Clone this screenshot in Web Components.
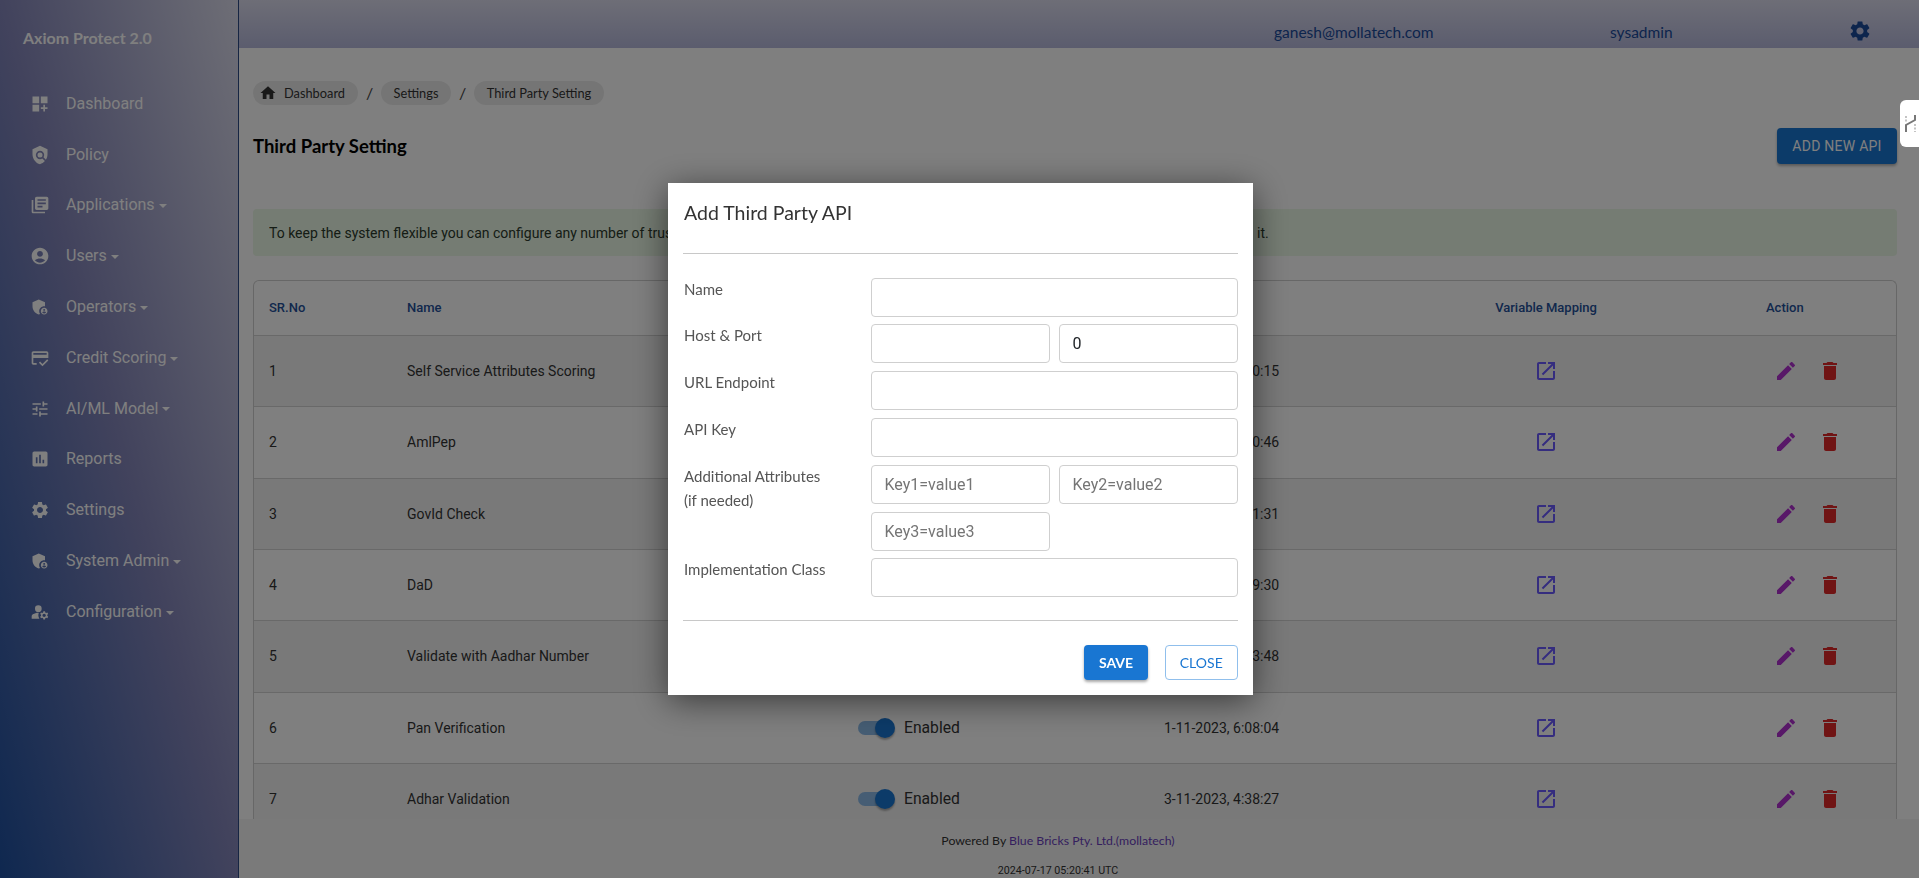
<!DOCTYPE html>
<html lang="en">
<head>
<meta charset="utf-8">
<title>Third Party Setting</title>
<style>
html,body{margin:0;padding:0;height:100%;overflow:hidden}
body{font-family:Roboto,sans-serif;background:#fff}
</style>
</head>
<body>
<app-shell>
  <app-sidebar slot="side">
    <nav-item icon="dashboard">Dashboard</nav-item>
    <nav-item icon="policy">Policy</nav-item>
    <nav-item icon="books" caret>Applications</nav-item>
    <nav-item icon="account" caret>Users</nav-item>
    <nav-item icon="admin" caret>Operators</nav-item>
    <nav-item icon="credit" caret>Credit Scoring</nav-item>
    <nav-item icon="tune" caret>AI/ML Model</nav-item>
    <nav-item icon="assessment">Reports</nav-item>
    <nav-item icon="settings">Settings</nav-item>
    <nav-item icon="admin" caret>System Admin</nav-item>
    <nav-item icon="manage" caret>Configuration</nav-item>
  </app-sidebar>
  <app-header slot="top"></app-header>
  <page-content slot="main">
    <bread-crumbs></bread-crumbs>
    <title-bar></title-bar>
    <info-alert>To keep the system flexible you can configure any number of trusted third party APIs, map their variables and enable or disable each one as you need</info-alert>
    <api-table>
      <api-row n="1" name="Self Service Attributes Scoring" date="1-11-2023, 6:10:15"></api-row>
      <api-row n="2" name="AmlPep" date="1-11-2023, 6:10:46"></api-row>
      <api-row n="3" name="GovId Check" date="1-11-2023, 6:11:31"></api-row>
      <api-row n="4" name="DaD" date="1-11-2023, 6:09:30"></api-row>
      <api-row n="5" name="Validate with Aadhar Number" date="1-11-2023, 6:13:48"></api-row>
      <api-row n="6" name="Pan Verification" date="1-11-2023, 6:08:04"></api-row>
      <api-row n="7" name="Adhar Validation" date="3-11-2023, 4:38:27"></api-row>
    </api-table>
  </page-content>
  <page-footer slot="foot"></page-footer>
</app-shell>
<api-modal></api-modal>
<side-tab></side-tab>

<script>
const P={
dashboard:'<path d="M3 3h8v8H3zm10 0h8v8h-8zM3 13h8v8H3zm15 0h-2v3h-3v2h3v3h2v-3h3v-2h-3z"/>',
policy:'<path d="M21 5l-9-4-9 4v6c0 5.55 3.84 10.74 9 12 2.3-.56 4.33-1.9 5.88-3.71l-3.12-3.12c-1.94 1.29-4.58 1.07-6.29-.64-1.95-1.95-1.95-5.12 0-7.07 1.95-1.95 5.12-1.95 7.07 0 1.71 1.71 1.92 4.35.64 6.29l2.9 2.9C20.29 15.69 21 13.38 21 11V5z"/><circle cx="12" cy="12" r="3"/>',
books:'<path d="M4 6H2v14c0 1.1.9 2 2 2h14v-2H4V6zm16-4H8c-1.1 0-2 .9-2 2v12c0 1.1.9 2 2 2h12c1.1 0 2-.9 2-2V4c0-1.1-.9-2-2-2zm-1 9H9V9h10v2zm-4 4H9v-2h6v2zm4-8H9V5h10v2z"/>',
account:'<path d="M12 2C6.48 2 2 6.48 2 12s4.48 10 10 10 10-4.48 10-10S17.52 2 12 2zm0 4c1.93 0 3.5 1.57 3.5 3.5S13.93 13 12 13s-3.5-1.57-3.5-3.5S10.07 6 12 6zm0 14c-2.03 0-4.43-.82-6.14-2.88C7.55 15.8 9.68 15 12 15s4.45.8 6.14 2.12C16.43 19.18 14.03 20 12 20z"/>',
admin:'<path d="M17 11c.34 0 .67.04 1 .09V6.27L10.5 3 3 6.27v4.91c0 4.54 3.2 8.79 7.5 9.82.55-.13 1.08-.32 1.6-.55-.69-.98-1.1-2.17-1.1-3.45 0-3.31 2.69-6 6-6z"/><path d="M17 13c-2.21 0-4 1.79-4 4s1.79 4 4 4 4-1.79 4-4-1.79-4-4-4zm0 1.38c.62 0 1.12.51 1.12 1.12s-.51 1.12-1.12 1.12-1.12-.51-1.12-1.12.5-1.12 1.12-1.12zm0 5.37c-.93 0-1.74-.46-2.24-1.17.05-.72 1.51-1.08 2.24-1.08s2.19.36 2.24 1.08c-.5.71-1.31 1.17-2.24 1.17z"/>',
credit:'<path d="M20 4H4c-1.11 0-2 .89-2 2v12c0 1.11.89 2 2 2h4v-2H4v-6h18V6c0-1.11-.89-2-2-2zm0 4H4V6h16v2zm-5.07 11.17l-2.83-2.83-1.41 1.41L14.93 22 22 14.93l-1.41-1.41-5.66 5.65z"/>',
tune:'<path d="M3 17v2h6v-2H3zM3 5v2h10V5H3zm10 16v-2h8v-2h-8v-2h-2v6h2zM7 9v2H3v2h4v2h2V9H7zm14 4v-2H11v2h10zm-6-4h2V7h4V5h-4V3h-2v6z"/>',
assessment:'<path d="M19 3H5c-1.1 0-2 .9-2 2v14c0 1.1.9 2 2 2h14c1.1 0 2-.9 2-2V5c0-1.1-.9-2-2-2zM9 17H7v-7h2v7zm4 0h-2V7h2v10zm4 0h-2v-4h2v4z"/>',
settings:'<path d="M19.14 12.94c.04-.3.06-.61.06-.94 0-.32-.02-.64-.07-.94l2.03-1.58c.18-.14.23-.41.12-.61l-1.92-3.32c-.12-.22-.37-.29-.59-.22l-2.39.96c-.5-.38-1.03-.7-1.62-.94l-.36-2.54c-.04-.24-.24-.41-.48-.41h-3.84c-.24 0-.43.17-.47.41l-.36 2.54c-.59.24-1.13.57-1.62.94l-2.39-.96c-.22-.08-.47 0-.59.22L2.74 8.87c-.12.21-.08.47.12.61l2.03 1.58c-.05.3-.09.63-.09.94s.02.64.07.94l-2.03 1.58c-.18.14-.23.41-.12.61l1.92 3.32c.12.22.37.29.59.22l2.39-.96c.5.38 1.03.7 1.62.94l.36 2.54c.05.24.24.41.48.41h3.84c.24 0 .44-.17.47-.41l.36-2.54c.59-.24 1.13-.56 1.62-.94l2.39.96c.22.08.47 0 .59-.22l1.92-3.32c.12-.22.07-.47-.12-.61l-2.01-1.58zM12 15.6c-1.98 0-3.6-1.62-3.6-3.6s1.62-3.6 3.6-3.6 3.6 1.62 3.6 3.6-1.62 3.6-3.6 3.6z"/>',
manage:'<path d="M10.67 13.02c-.22-.01-.44-.02-.67-.02-2.42 0-4.68.67-6.61 1.82-.88.52-1.39 1.5-1.39 2.53V20h9.26c-.79-1.13-1.26-2.51-1.26-4 0-1.07.25-2.07.67-2.98z"/><circle cx="10" cy="8" r="4"/><path d="M20.75 16c0-.22-.03-.42-.06-.63l1.14-1.01-1-1.73-1.45.49c-.32-.27-.68-.48-1.08-.63L18 11h-2l-.3 1.49c-.4.15-.76.36-1.08.63l-1.45-.49-1 1.73 1.14 1.01c-.03.21-.06.41-.06.63s.03.42.06.63l-1.14 1.01 1 1.73 1.45-.49c.32.27.68.48 1.08.63L16 21h2l.3-1.49c.4-.15.76-.36 1.08-.63l1.45.49 1-1.73-1.14-1.01c.03-.21.06-.41.06-.63zM17 18c-1.1 0-2-.9-2-2s.9-2 2-2 2 .9 2 2-.9 2-2 2z"/>',
home:'<path d="M10 20v-6h4v6h5v-8h3L12 3 2 12h3v8z"/>',
open:'<path d="M19 19H5V5h7V3H5c-1.11 0-2 .9-2 2v14c0 1.1.89 2 2 2h14c1.1 0 2-.9 2-2v-7h-2v7zM14 3v2h3.59l-9.83 9.83 1.41 1.41L19 6.41V10h2V3h-7z"/>',
edit:'<path d="M3 17.25V21h3.75L17.81 9.94l-3.75-3.75L3 17.25zM20.71 7.04c.39-.39.39-1.02 0-1.41l-2.34-2.34c-.39-.39-1.02-.39-1.41 0l-1.83 1.83 3.75 3.75 1.83-1.83z"/>',
del:'<path d="M6 19c0 1.1.9 2 2 2h8c1.1 0 2-.9 2-2V7H6v12zM19 4h-3.5l-1-1h-5l-1 1H5v2h14V4z"/>'
};
const HEAD='Lato,"Open Sans",sans-serif';
function def(name,html,extra){
  customElements.define(name,class extends HTMLElement{
    constructor(){super();this.attachShadow({mode:'open'});}
    connectedCallback(){
      const attrs={};for(const a of this.attributes)attrs[a.name]=a.value;
      this.shadowRoot.innerHTML=typeof html==='function'?html(attrs):html;
      if(extra)extra(this);
    }
  });
}
def('x-icon',a=>`<style>:host{display:inline-flex;width:${a.size||24}px;height:${a.size||24}px;flex:none;color:${a.color||'inherit'}}svg{width:100%;height:100%;fill:currentColor;display:block}</style><svg viewBox="0 0 24 24" aria-hidden="true">${P[a.name]||''}</svg>`);

def('app-shell',`<style>
:host{display:grid;grid-template-columns:239px 1fr;grid-template-rows:48px 1fr 59px;height:878px;overflow:hidden}
::slotted([slot=side]){grid-row:1/4}
</style><slot name="side"></slot><slot name="top"></slot><slot name="main"></slot><slot name="foot"></slot>`);

def('app-sidebar',`<style>
:host{display:flex;flex-direction:column;box-sizing:border-box;border-right:1px solid #2c4a86;background:linear-gradient(to top right,#1e50a0 0%,#8486ba 50%,#dcdcec 100%);color:#fff}
.brand{height:78.5px;box-sizing:border-box;padding:25px 0 0 23px;font:700 16px/26px ${HEAD};color:#fff}
</style><div class="brand">Axiom Protect 2.0</div><slot></slot>`);

def('nav-item',a=>`<style>
:host{display:flex;align-items:center;height:50.8px;padding-left:30px;gap:16px;font:400 16px/24px Roboto,sans-serif;color:#fff}
.c{display:inline-block;border-top:4px solid currentColor;border-left:4px solid transparent;border-right:4px solid transparent;margin-left:4px;vertical-align:middle}
</style><x-icon name="${a.icon}" size="20"></x-icon><span><slot></slot>${'caret' in a?'<i class="c"></i>':''}</span>`);

def('app-header',`<style>
:host{display:flex;background:linear-gradient(180deg,#dcdcee,#b6b9dc);color:#1a4a9a;font:400 15.5px/24px ${HEAD};position:relative}
.m{position:absolute;top:20px}
</style><span class="m" style="left:1035px">ganesh@mollatech.com</span><span class="m" style="left:1371px">sysadmin</span><x-icon class="m" style="left:1609px;top:19px" name="settings" size="24"></x-icon>`);

def('page-content',`<style>
:host{display:block;overflow:hidden;padding:33px 22px 0 14px;background:#fff;min-height:0}
</style><slot></slot>`);

def('bread-crumbs',`<style>
:host{display:flex;align-items:center;height:24px;font:400 12.8px/24px ${HEAD};color:#333;white-space:nowrap}
.chip{display:inline-flex;align-items:center;justify-content:center;height:24px;background:#ebebeb;border-radius:12px;box-sizing:border-box}
.s{width:23px;text-align:center;font-size:16px;color:#444}
.h{justify-content:flex-start;padding-left:6px;gap:7px;width:105px}
</style><span class="chip h"><x-icon name="home" size="18"></x-icon>Dashboard</span><span class="s">/</span><span class="chip" style="width:70px">Settings</span><span class="s">/</span><span class="chip" style="width:130px">Third Party Setting</span>`);

def('title-bar',`<style>
:host{display:flex;align-items:center;justify-content:space-between;height:36px;margin-top:23px}
h1{margin:0;font:700 18.5px/28px ${HEAD};color:#000}
button{width:120px;height:36px;border:0;border-radius:4px;background:#1976d2;color:#fff;font:400 14px/36px Roboto,sans-serif;letter-spacing:.25px;padding:0;box-shadow:0 2px 3px rgba(0,0,0,.3)}
</style><h1>Third Party Setting</h1><button>ADD NEW API</button>`);

def('info-alert',`<style>
:host{display:flex;align-items:center;box-sizing:border-box;height:47px;margin-top:45px;padding:0 16px;background:#eaf8e6;border-radius:4px;color:#2c3a2c;font:400 14px/20px Roboto,sans-serif;white-space:nowrap}
.m{display:block;width:988px;overflow:hidden;flex:none}
</style><span class="m"><slot></slot></span><span>it.</span>`);

const COLS='137px 451px 306px 194px 408px 1fr';
def('api-table',`<style>
:host{display:block;box-sizing:border-box;margin-top:24px;border:1px solid #cfcfcf;border-bottom:0;border-radius:6px 6px 0 0}
.h{display:grid;grid-template-columns:${COLS};height:54px;align-items:center;font:500 13px/20px Roboto,sans-serif;color:#24509a}
.h span{padding-left:16px}.h span:first-child{padding-left:15px}.h .c{padding:0;text-align:center}
</style><div class="h"><span>SR.No</span><span>Name</span><span>Status</span><span>Created On</span><span class="c">Variable Mapping</span><span>Action</span></div><slot></slot>`);

def('api-row',a=>`<style>
:host{display:grid;grid-template-columns:${COLS};height:71.33px;box-sizing:border-box;border-top:1px solid #d2d2d2;align-items:center;font:400 14px/20px Roboto,sans-serif;color:#333;background:${(+a.n)%2?'#f3f3f3':'#fff'}}
.p{padding-left:16px}.f{padding-left:15px;color:#333}
.s{display:flex;align-items:center;padding-left:16px;font-size:15.7px;gap:12px}
.v{display:flex;justify-content:center}
.a{display:flex;gap:20px;padding-left:24px}
</style><span class="f">${a.n}</span><span class="p">${a.name}</span><span class="s"><x-toggle></x-toggle>Enabled</span><span class="p">${a.date}</span><span class="v"><x-icon name="open" color="#6a5aff"></x-icon></span><span class="a"><x-icon name="edit" color="#b030d0"></x-icon><x-icon name="del" color="#e02828"></x-icon></span>`);

def('x-toggle',`<style>
:host{display:block;position:relative;width:34px;height:14px;border-radius:7px;background:#8cbbe9}
i{position:absolute;right:-3px;top:-3px;width:20px;height:20px;border-radius:50%;background:#1976d2;box-shadow:0 2px 2px rgba(0,0,0,.3)}
</style><i></i>`);

def('page-footer',`<style>
:host{display:block;background:#f5f5f5;text-align:center;padding-right:42px;font:400 12.3px/18px ${HEAD};color:#333}
.a{padding-top:13px}.b{margin-top:13px;font:400 10.7px/16px Roboto,sans-serif;color:#333}
b{font-weight:400;color:#6a3fbd}
</style><div class="a">Powered By <b>Blue Bricks Pty. Ltd.(mollatech)</b></div><div class="b">2024-07-17 05:20:41 UTC</div>`);

def('api-modal',`<style>
:host{position:fixed;inset:0;display:flex;align-items:center;justify-content:center;padding-left:2px;background:rgba(0,0,0,.5);z-index:10}
.d{width:585px;box-sizing:border-box;background:#fff;padding:15px;box-shadow:0 6px 32px rgba(0,0,0,.55)}
h2{margin:0 0 25px;padding-left:1px;font:400 19.5px/30px ${HEAD};color:#333}
hr{margin:0;border:0;border-top:1px solid #c8c8c8}
.g{display:grid;grid-template-columns:188px 1fr 1fr;column-gap:0;row-gap:7.8px;padding:24px 0 23px}
.g>label{grid-column:1;padding-left:1px;margin-top:-1px;font:400 15px/24px ${HEAD};color:#555}
.w{grid-column:2/4}
.t{display:grid;grid-template-columns:1fr 1fr;gap:7.8px 9px;grid-column:2/4}
input{display:block;width:100%;box-sizing:border-box;height:39px;border:1px solid #cfcfcf;border-radius:4px;padding:0 12.5px;font:400 16px Roboto,sans-serif;color:#212529;background:#fff;outline:0}
input::placeholder{color:#757575}
.b{display:flex;justify-content:flex-end;gap:16.5px;padding-top:24px;}
button{height:35px;border-radius:4px;font:400 14px/33px ${HEAD};padding:0;box-sizing:border-box}
.s{width:64px;background:#1976d2;color:#fff;border:0;font-weight:700;box-shadow:0 2px 3px rgba(0,0,0,.35)}
.c{width:73.5px;background:#fff;color:#1976d2;border:1px solid #90bfec}
</style><div class="d">
<h2>Add Third Party API</h2><hr>
<div class="g">
<label>Name</label><div class="w"><input></div>
<label>Host &amp; Port</label><div class="t"><input><input value="0"></div>
<label>URL Endpoint</label><div class="w"><input></div>
<label>API Key</label><div class="w"><input></div>
<label>Additional Attributes<br>(if needed)</label><div class="t"><input placeholder="Key1=value1"><input placeholder="Key2=value2"><input placeholder="Key3=value3"></div>
<label>Implementation Class</label><div class="w"><input></div>
</div><hr>
<div class="b"><button class="s">SAVE</button><button class="c">CLOSE</button></div>
</div>`);

def('side-tab',`<style>
:host{position:fixed;right:0;top:100px;width:19px;height:47px;background:#fff;border-radius:6px 0 0 6px;z-index:20;display:block;overflow:hidden}
svg{display:block;width:14px;height:20px;margin:14px 0 0 4px;fill:none;stroke:#777;stroke-width:2}
</style><svg viewBox="0 0 14 20"><path d="M2 18v-7l9-5V1"/><path d="M2 2v7M11 10v8" stroke="#b5b5b5" stroke-width="1.6" stroke-dasharray="2 1.5"/></svg>`);
</script>
</body>
</html>
